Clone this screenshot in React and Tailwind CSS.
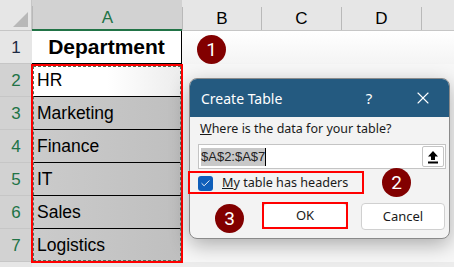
import { Check, X } from 'lucide-react';

const rows = ['HR', 'Marketing', 'Finance', 'IT', 'Sales', 'Logistics'];

const Badge = ({ n, className }) => (
  <div
    className={`absolute w-[29px] h-[29px] rounded-full bg-[#820000] text-white text-[19px] flex items-center justify-center leading-none ${className}`}
    style={{ fontFamily: 'Roboto, sans-serif' }}
  >
    {n}
  </div>
);

const ColHead = ({ label, active }) => (
  <div className={`h-[31px] flex flex-col justify-end ${active ? 'bg-[#d2d2d2] border-b-2 border-[#217346]' : 'border-b border-[#c6c6c6]'}`}>
    <div className={`h-[23px] border-l border-[#b9b9b9] flex items-center justify-center text-[17px] ${active ? 'text-[#217346]' : 'text-black'}`}>
      {label}
    </div>
  </div>
);

const RowHead = ({ n, active }) => (
  <div className={`h-[33px] border-b border-[#c6c6c6] flex items-end justify-center pb-[3px] text-[17px] ${active ? 'bg-[#d2d2d2] text-[#217346]' : 'bg-[#e6e6e6] text-[#1e2a44]'}`}>
    {n}
  </div>
);

export default function App() {
  return (
    <div className="relative w-[454px] h-[267px] overflow-hidden bg-white" style={{ fontFamily: '"Liberation Sans", Arial, sans-serif' }}>
      <div className="grid grid-cols-[32px_150px_79px_80px_80px_33px]">
        {/* header row */}
        <div className="h-[31px] bg-[#e6e6e6] border-b border-[#c6c6c6] border-r border-[#c6c6c6] flex items-end justify-end p-[3px]">
          <div className="w-0 h-0 border-l-[15px] border-l-transparent border-b-[15px] border-b-[#b8b8b8]" />
        </div>
        <div className="bg-[#e6e6e6]"><ColHead label="A" active /></div>
        <div className="bg-[#e6e6e6]"><ColHead label="B" /></div>
        <div className="bg-[#e6e6e6]"><ColHead label="C" /></div>
        <div className="bg-[#e6e6e6]"><ColHead label="D" /></div>
        <div className="bg-[#e6e6e6]"><ColHead label="" /></div>

        {/* row 1 */}
        <RowHead n={1} />
        <div className="h-[33px] border-b border-black border-r border-[#d4d4d4] flex items-center justify-center font-bold text-[21px] text-black">
          Department
        </div>
        <div className="col-span-4 h-[33px] bg-gradient-to-b from-white to-[#f4f4f4]" />

        {rows.map((r, i) => (
          <div key={r} className="contents">
            <RowHead n={i + 2} active />
            <div
              className={`h-[33px] border-b border-black flex items-center pl-[5px] text-[17.5px] text-black ${i === 0 ? 'bg-gradient-to-r from-white via-white to-[#ececec]' : 'bg-gradient-to-r from-[#cbcbcb] to-[#bfbfbf]'}`}
            >
              {r}
            </div>
            <div className="col-span-4 h-[33px] bg-[#f7f7f7]" />
          </div>
        ))}
        <div className="h-[10px] bg-[#e6e6e6]" />
        <div className="col-span-5 h-[10px] bg-[#ececec]" />
      </div>

      {/* selection outline on column A */}
      <div className="absolute left-[31px] top-[64px] w-[152px] h-[199px] border-2 border-[#ff0000]">
        <div className="w-full h-full border border-dashed border-[#4f6f5a]" />
      </div>

      {/* dialog */}
      <div
        className="absolute left-[189px] top-[78px] w-[261px] h-[161px] rounded-[8px] overflow-hidden bg-[#f3f3f3] border border-[#8a8a8a] shadow-[0_6px_20px_rgba(0,0,0,0.3)]"
        style={{ fontFamily: '"Noto Sans", "Open Sans", sans-serif' }}
      >
        <div className="h-[38px] bg-[#245a80] flex items-center pl-[11px] text-white text-[14px]">
          <span className="flex-1">Create Table</span>
          <span className="w-[20px] text-center mr-[34px] text-[15px]">?</span>
          <X className="w-[20px] h-[20px] mr-[16px]" strokeWidth={1.3} />
        </div>
        <div className="pl-[8px] pr-[3px] pt-[2px] text-[12.5px] text-[#1a1a1a]">
          <div className="pl-[2px] leading-[20px]">
            <span className="underline">W</span>here is the data for your table?
          </div>
          <div className="mt-[5px] h-[25px] bg-white border border-[#c4c4c4] flex items-center pl-[2px]">
            <span className="bg-[#c8c8c8] text-[13px] leading-[18px] text-[#222]" style={{ fontFamily: '"Liberation Sans", Arial, sans-serif' }}>$A$2:$A$7</span>
            <span className="w-px h-[18px] bg-black" />
            <div className="ml-auto mr-px w-[22px] h-[21px] bg-white border border-[#c4c4c4] rounded-[2px] flex flex-col items-center justify-center">
              <svg width="12" height="14" viewBox="0 0 12 14">
                <path d="M6 1 L11 6.5 H8 V10 H4 V6.5 H1 Z" fill="#000" />
                <rect x="1" y="11.5" width="10" height="2" fill="#000" />
              </svg>
            </div>
          </div>
          <div className="mt-[4px] flex items-center h-[20px]">
            <div className="w-[15px] h-[15px] rounded-[3px] bg-[#0f5fba] flex items-center justify-center">
              <Check className="w-[11px] h-[11px] text-white" strokeWidth={2} />
            </div>
            <span className="ml-[9px] text-[12.6px]">
              <span className="underline">M</span>y table has headers
            </span>
          </div>
          <div className="mt-[10px] flex justify-end gap-[14px] pr-px">
            <div className="w-[84px] h-[26px] bg-white border border-[#d0d0d0] border-b-[#1a5fb4] rounded-[4px] flex items-center justify-center text-[13px]">
              OK
            </div>
            <div className="w-[84px] h-[27px] bg-white border border-[#d0d0d0] rounded-[4px] flex items-center justify-center text-[13px]">
              Cancel
            </div>
          </div>
        </div>
      </div>

      {/* red highlight boxes */}
      <div className="absolute left-[188px] top-[171px] w-[176px] h-[23px] border-2 border-[#ff0000]" />
      <div className="absolute left-[262px] top-[202px] w-[86px] h-[27px] border-2 border-[#ff0000]" />

      <Badge n={1} className="left-[197px] top-[35px]" />
      <Badge n={2} className="left-[382px] top-[168px]" />
      <Badge n={3} className="left-[215px] top-[204px]" />
    </div>
  );
}
